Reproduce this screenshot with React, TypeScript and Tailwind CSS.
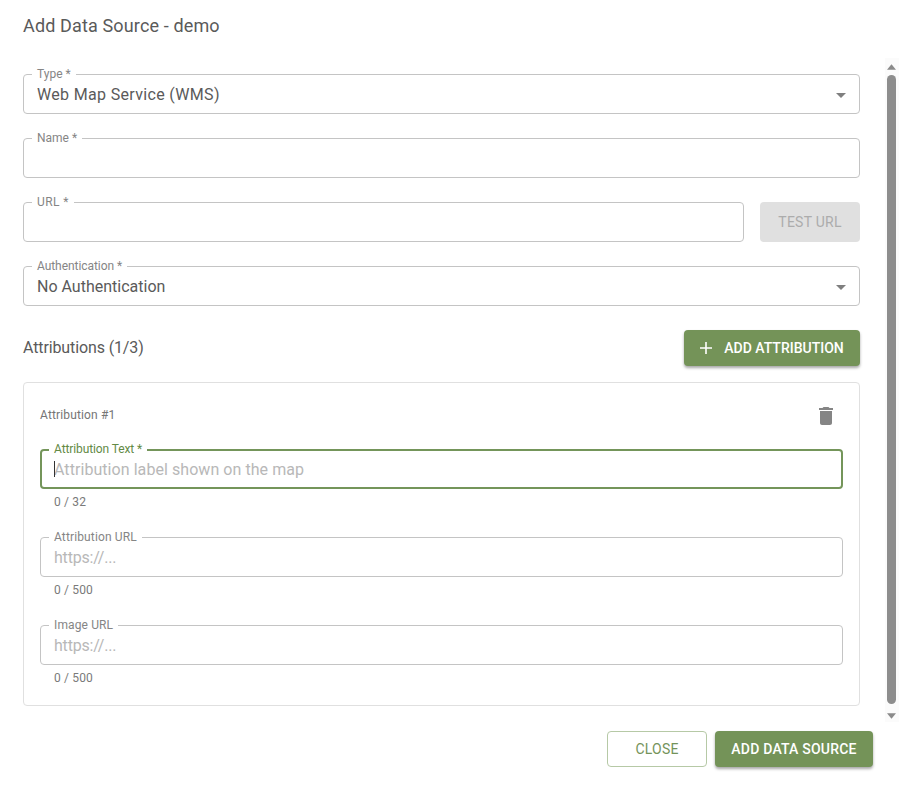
import React from "react";

function Field({ label, value, placeholder, select, focused, className = "", textClass = "", labelClass = "" }: { label: string; value?: string; placeholder?: string; select?: boolean; focused?: boolean; className?: string; textClass?: string; labelClass?: string }) {
  return (
    <div className={`relative h-10 rounded ${focused ? "border-2 border-[#74955a]" : "border border-[#c4c4c4]"} ${className}`}>
      <span className={`absolute ${focused ? "left-[7px] -top-[10px] text-[#638a45]" : "left-2 -top-[9px] text-[#858585]"} bg-white px-[5px] text-xs leading-4 whitespace-nowrap ${labelClass}`}>{label}</span>
      <div className={`flex h-full items-center pt-[2px] ${focused ? "pl-3 pr-3" : "pl-[13px] pr-3"}`}>
        <input readOnly defaultValue={value} placeholder={placeholder} className={`min-w-0 flex-1 bg-transparent text-base text-[#5a5a5a] outline-none placeholder:text-[#b8b8b8] ${textClass}`} />
        {select && (
          <svg viewBox="0 0 10 5" className="mr-[1px] h-[5px] w-[10px] fill-[#7f7f7f]"><path d="M0 0h10L5 5z" /></svg>
        )}
      </div>
      {focused && <span className="absolute left-3 top-[10px] h-4 w-px bg-[#333333]" />}
    </div>
  );
}

function Counter({ text }: { text: string }) {
  return <div className="mt-[6px] h-[14px] pl-[14px] text-xs leading-[14px] tracking-[0.15px] text-[#7a7a7a]">{text}</div>;
}

export default function App() {
  return (
    <div className="flex h-[786px] w-[899px] flex-col overflow-hidden bg-white font-['Roboto',sans-serif]">
      <div className="flex h-[58px] shrink-0 items-start pl-[23px] pt-[14px] text-lg leading-6 tracking-[0.14px] text-[#5a5a5a]">Add Data Source - demo</div>
      <div className="flex h-[664px] shrink-0">
        <div className="flex w-[860px] flex-col gap-6 pl-[23px] pt-4">
          <Field label="Type *" value="Web Map Service (WMS)" select textClass="tracking-[0.33px]" />
          <Field label="Name *" />
          <div className="flex gap-4">
            <Field label="URL *" className="flex-1" labelClass="tracking-[0.4px]" />
            <button className="h-10 w-[100px] rounded bg-[#e0e0e0] text-sm tracking-[0.25px] text-[#acacac]">TEST URL</button>
          </div>
          <Field label="Authentication *" value="No Authentication" select labelClass="tracking-[-0.06px]" />
          <div className="flex h-9 items-center justify-between">
            <span className="text-base tracking-[-0.12px] text-[#5a5a5a]">Attributions (1/3)</span>
            <button className="flex h-9 w-[176px] items-center justify-center gap-[11px] rounded bg-[#749358] pr-[1px] pb-[1px] text-sm font-medium text-white shadow-[0_2px_3px_rgba(0,0,0,0.35)]">
              <svg viewBox="0 0 14 14" className="h-[14px] w-[14px] stroke-white" fill="none" strokeWidth="1.6"><path d="M7 1v12M1 7h12" /></svg>
              ADD ATTRIBUTION
            </button>
          </div>
          <div className="-mt-2 flex h-[324px] flex-col rounded border border-[#e0e0e0] px-4 pt-4">
            <div className="flex h-[34px] shrink-0 items-center justify-between">
              <span className="-mt-[2px] text-xs tracking-[0.15px] text-[#757575]">Attribution #1</span>
              <svg viewBox="0 0 24 24" className="mr-[5px] h-6 w-6 fill-[#858585]"><path d="M6 19c0 1.1.9 2 2 2h8c1.1 0 2-.9 2-2V7H6v12zM19 4h-3.5l-1-1h-5l-1 1H5v2h14V4z" /></svg>
            </div>
            <Field label="Attribution Text *" placeholder="Attribution label shown on the map" focused className="mt-[16px]" textClass="tracking-[0.06px]" labelClass="tracking-[-0.1px]" />
            <Counter text="0 / 32" />
            <Field label="Attribution URL" placeholder="https://..." className="mt-[28px]" textClass="tracking-[-0.2px]" labelClass="tracking-[0.13px]" />
            <Counter text="0 / 500" />
            <Field label="Image URL" placeholder="https://..." className="mt-[28px]" textClass="tracking-[-0.2px]" labelClass="tracking-[0.13px]" />
            <Counter text="0 / 500" />
          </div>
        </div>
        <div className="ml-[25px] flex w-[14px] flex-col items-center bg-[#fbfbfb] pr-[1px]">
          <svg viewBox="0 0 10 6" className="mt-[6px] h-[6px] w-[9px] fill-[#8a8a8a]"><path d="M5 0l5 6H0z" /></svg>
          <div className="mt-[5px] w-[9px] flex-1 rounded-full bg-[#8d8d8d]" />
          <svg viewBox="0 0 10 6" className="mb-[3px] mt-[9px] h-[6px] w-[9px] fill-[#8a8a8a]"><path d="M0 0h10L5 6z" /></svg>
        </div>
      </div>
      <div className="flex justify-end gap-2 pr-[26px] pt-[9px]">
        <button className="h-9 w-[100px] rounded border border-[#b6c9a6] pb-[1px] text-sm tracking-[0.2px] text-[#74935a]">CLOSE</button>
        <button className="h-9 w-[158px] rounded bg-[#749358] pb-[1px] text-sm font-medium tracking-[0.2px] text-white shadow-[0_2px_3px_rgba(0,0,0,0.35)]">ADD DATA SOURCE</button>
      </div>
    </div>
  );
}
